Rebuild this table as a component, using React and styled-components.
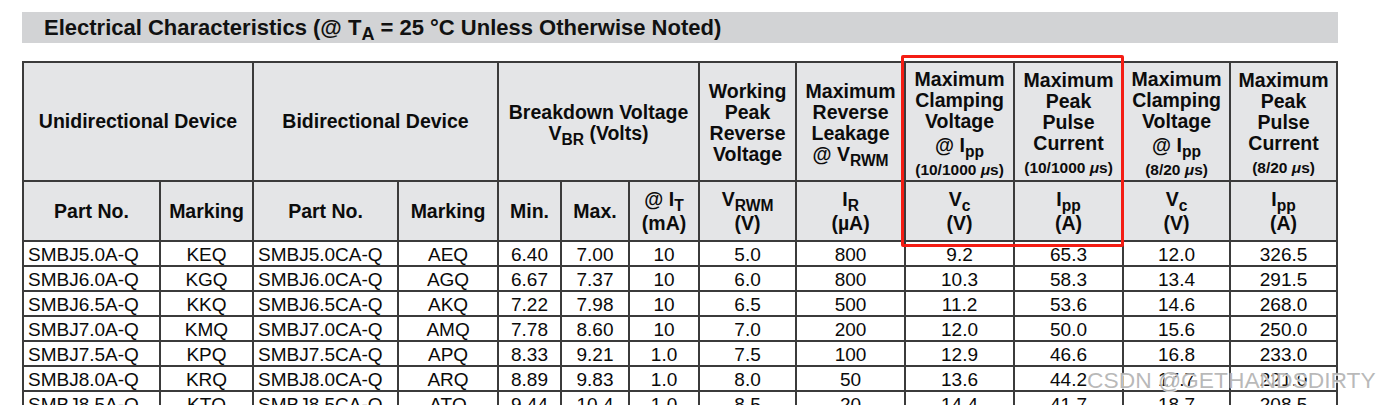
import React from "react";
import styled, { createGlobalStyle } from "styled-components";

const Global = createGlobalStyle`
  html, body { margin: 0; padding: 0; background: #ffffff; }
  body { font-family: "Liberation Sans", Arial, sans-serif; color: #000; }
`;

const Page = styled.div`
  position: relative;
  width: 1381px;
  height: 405px;
  overflow: hidden;
  padding: 12px 0 0 22px;
  box-sizing: border-box;
`;

const TitleBar = styled.div`
  width: 1316px;
  height: 31px;
  background: #d2d3d5;
  padding-left: 22px;
  box-sizing: border-box;
  font-size: 22px;
  line-height: 31px;
  font-weight: 700;
  color: #111;
  margin-bottom: 18px;
  white-space: nowrap;
`;

const TitleSub = styled.span`
  font-size: 0.82em;
  position: relative;
  top: 0.3em;
`;

const Sub = styled.sub`
  font-size: 0.8em;
  vertical-align: -0.32em;
  line-height: 0;
`;

const Table = styled.table`
  border-collapse: collapse;
  table-layout: fixed;
  width: 1316px;
`;

const HeadRow = styled.tr`
  height: ${(p) => p.$h}px;
`;

const Th = styled.th`
  border: 2px solid #3b3b3b;
  background: #e4e5e7;
  font-size: 19.5px;
  font-weight: 700;
  line-height: ${(p) => p.$lh || 21}px;
  text-align: center;
  vertical-align: middle;
  padding: ${(p) => p.$pt || 0}px 2px 0;
  color: #0c0c0c;
`;

const Small = styled.span`
  display: block;
  font-size: 15.5px;
  line-height: 20px;
  margin-top: 4px;
  white-space: nowrap;
`;

const LowLine = styled.span`
  display: inline-block;
  margin-top: 3px;
`;

const Mu = styled.i`
  font-style: italic;
`;

const DataRow = styled.tr`
  height: 25px;
`;

const Td = styled.td`
  border: 2px solid #3b3b3b;
  font-size: 19px;
  line-height: 21px;
  padding: 1px 4px 0;
  text-align: ${(p) => (p.$left ? "left" : "center")};
  white-space: nowrap;
  overflow: hidden;
  color: #0a0a0a;
`;

const RedBox = styled.div`
  position: absolute;
  left: 901px;
  top: 55px;
  width: 223px;
  height: 192px;
  border: 3px solid #f41d14;
  border-radius: 2px;
  box-sizing: border-box;
  pointer-events: none;
`;

const Watermark = styled.div`
  position: absolute;
  left: 1087px;
  top: 366px;
  font-size: 22.8px;
  line-height: 28px;
  color: rgba(125, 125, 125, 0.55);
  text-shadow: 0 0 1px rgba(255, 255, 255, 0.9), 1px 1px 0 rgba(255, 255, 255, 0.8);
  white-space: nowrap;
  pointer-events: none;
`;

const widths = [137, 93, 145, 100, 63, 68, 70, 97, 109, 109, 109, 107, 107];

const rows = [
  ["SMBJ5.0A-Q", "KEQ", "SMBJ5.0CA-Q", "AEQ", "6.40", "7.00", "10", "5.0", "800", "9.2", "65.3", "12.0", "326.5"],
  ["SMBJ6.0A-Q", "KGQ", "SMBJ6.0CA-Q", "AGQ", "6.67", "7.37", "10", "6.0", "800", "10.3", "58.3", "13.4", "291.5"],
  ["SMBJ6.5A-Q", "KKQ", "SMBJ6.5CA-Q", "AKQ", "7.22", "7.98", "10", "6.5", "500", "11.2", "53.6", "14.6", "268.0"],
  ["SMBJ7.0A-Q", "KMQ", "SMBJ7.0CA-Q", "AMQ", "7.78", "8.60", "10", "7.0", "200", "12.0", "50.0", "15.6", "250.0"],
  ["SMBJ7.5A-Q", "KPQ", "SMBJ7.5CA-Q", "APQ", "8.33", "9.21", "1.0", "7.5", "100", "12.9", "46.6", "16.8", "233.0"],
  ["SMBJ8.0A-Q", "KRQ", "SMBJ8.0CA-Q", "ARQ", "8.89", "9.83", "1.0", "8.0", "50", "13.6", "44.2", "17.7", "221.0"],
  ["SMBJ8.5A-Q", "KTQ", "SMBJ8.5CA-Q", "ATQ", "9.44", "10.4", "1.0", "8.5", "20", "14.4", "41.7", "18.7", "208.5"],
];

function PulseHead({ top1, top2, low, pulse }) {
  return (
    <Th $pt={5}>
      Maximum
      <br />
      {top1}
      <br />
      {top2}
      <br />
      {low}
      <Small>
        ({pulse} <Mu>μ</Mu>s)
      </Small>
    </Th>
  );
}

export default function App() {
  const ipp = (
    <LowLine>
      @ I<Sub>pp</Sub>
    </LowLine>
  );
  return (
    <Page>
      <Global />
      <TitleBar>
        Electrical Characteristics (@ T<TitleSub>A</TitleSub> = 25 °C Unless Otherwise Noted)
      </TitleBar>
      <Table>
        <colgroup>
          {widths.map((w, i) => (
            <col key={i} style={{ width: w }} />
          ))}
        </colgroup>
        <thead>
          <HeadRow $h={119}>
            <Th colSpan={2}>Unidirectional Device</Th>
            <Th colSpan={2}>Bidirectional Device</Th>
            <Th colSpan={3} $pt={2}>
              Breakdown Voltage
              <br />V<Sub>BR</Sub> (Volts)
            </Th>
            <Th $pt={2}>
              Working
              <br />Peak
              <br />Reverse
              <br />Voltage
            </Th>
            <Th $pt={2}>
              Maximum
              <br />Reverse
              <br />Leakage
              <br />@ V<Sub>RWM</Sub>
            </Th>
            <PulseHead top1="Clamping" top2="Voltage" low={ipp} pulse="10/1000" />
            <PulseHead top1="Peak" top2="Pulse" low="Current" pulse="10/1000" />
            <PulseHead top1="Clamping" top2="Voltage" low={ipp} pulse="8/20" />
            <PulseHead top1="Peak" top2="Pulse" low="Current" pulse="8/20" />
          </HeadRow>
          <HeadRow $h={60}>
            <Th>Part No.</Th>
            <Th>Marking</Th>
            <Th>Part No.</Th>
            <Th>Marking</Th>
            <Th>Min.</Th>
            <Th>Max.</Th>
            <Th $lh={24}>
              @ I<Sub>T</Sub>
              <br />(mA)
            </Th>
            <Th $lh={24}>
              V<Sub>RWM</Sub>
              <br />(V)
            </Th>
            <Th $lh={24}>
              I<Sub>R</Sub>
              <br />(µA)
            </Th>
            <Th $lh={24}>
              V<Sub>c</Sub>
              <br />(V)
            </Th>
            <Th $lh={24}>
              I<Sub>pp</Sub>
              <br />(A)
            </Th>
            <Th $lh={24}>
              V<Sub>c</Sub>
              <br />(V)
            </Th>
            <Th $lh={24}>
              I<Sub>pp</Sub>
              <br />(A)
            </Th>
          </HeadRow>
        </thead>
        <tbody>
          {rows.map((r, i) => (
            <DataRow key={i}>
              {r.map((c, j) => (
                <Td key={j} $left={j === 0 || j === 2}>
                  {c}
                </Td>
              ))}
            </DataRow>
          ))}
        </tbody>
      </Table>
      <RedBox />
      <Watermark>CSDN @GETHANDSDIRTY</Watermark>
    </Page>
  );
}
